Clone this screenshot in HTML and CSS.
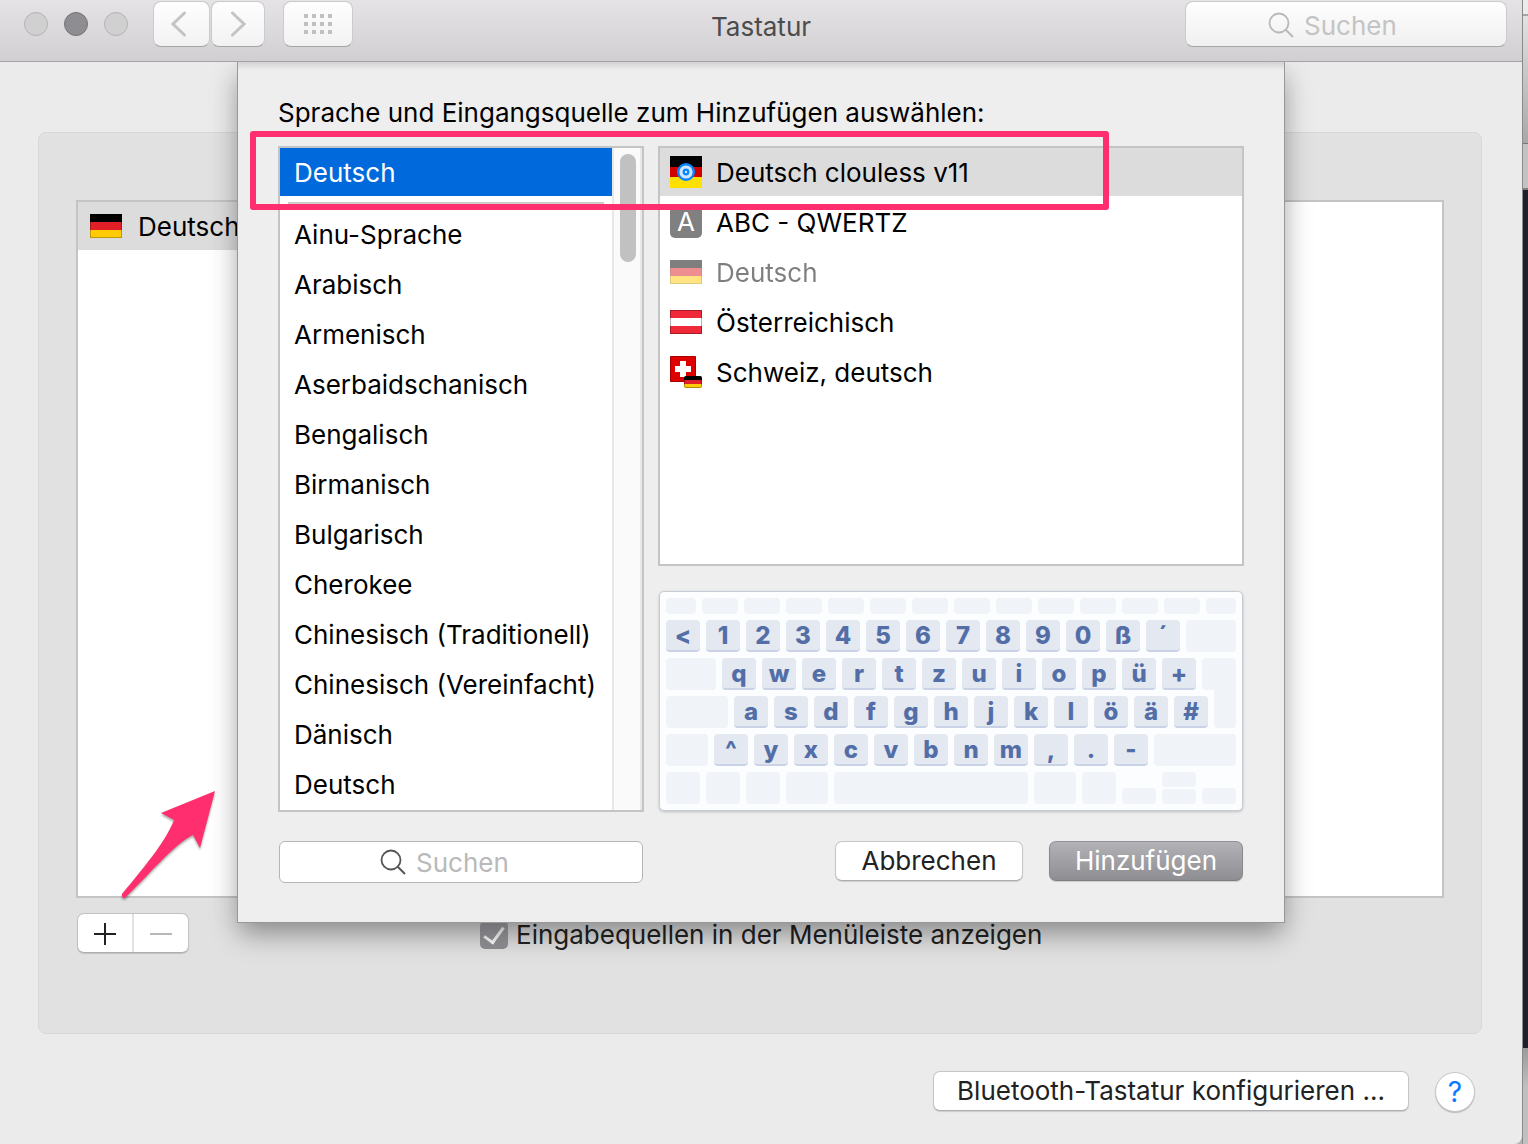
FILE: index.html
```html
<!DOCTYPE html>
<html lang="de">
<head>
<meta charset="utf-8">
<title>Tastatur</title>
<link rel="stylesheet" href="styles.css">
</head>
<body>
<svg class="defs" aria-hidden="true">
  <symbol id="flag-de" viewBox="0 0 32 24">
    <path fill="#000" d="M0 0h32v8H0z"/><path fill="#e01f26" d="M0 8h32v8H0z"/><path fill="#ffcb05" d="M0 16h32v8H0z"/>
    <path fill="none" stroke="#000" stroke-opacity=".25" d="M.5.5h31v23H.5z"/>
  </symbol>
  <symbol id="lens" viewBox="0 0 26 26">
    <circle cx="11" cy="11" r="9.500" fill="none" stroke="currentColor" stroke-width="1.800"/><path d="M17.500 17.500l7.500 7.500" stroke="currentColor" stroke-width="2"/>
  </symbol>
</svg>
<div class="desktop">
  <main class="window">
    <header class="titlebar">
      <div class="tools">
        <div class="lights"><span class="light"></span><span class="light dark"></span><span class="light"></span></div>
        <div class="nav">
          <button class="tool back" aria-label="Zurück"><svg width="16" height="26" viewBox="0 0 16 26"><path d="M13.500 2L2 13l11.500 11"/></svg></button>
          <button class="tool forward" aria-label="Vor"><svg width="16" height="26" viewBox="0 0 16 26"><path d="M2.500 2L14 13 2.500 24"/></svg></button>
        </div>
        <button class="tool all" aria-label="Alle einblenden"><svg width="28" height="20" viewBox="0 0 28 20"><path class="dots" d="M0 0h4v4H0zM8 0h4v4H8zM16 0h4v4h-4zM24 0h4v4h-4zM0 8h4v4H0zM8 8h4v4H8zM16 8h4v4h-4zM24 8h4v4h-4zM0 16h4v4H0zM8 16h4v4H8zM16 16h4v4h-4zM24 16h4v4h-4z"/></svg></button>
      </div>
      <h1 class="title">Tastatur</h1>
      <label class="search top-search"><svg width="26" height="26"><use href="#lens"/></svg><input type="text" placeholder="Suchen" aria-label="Suchen"></label>
    </header>

    <div class="content">
      <section class="panel">
        <div class="sources box">
          <ul class="source-list">
            <li class="row current"><svg class="flag" width="32" height="24"><use href="#flag-de"/></svg>Deutsch</li>
          </ul>
        </div>
        <div class="panel-foot">
          <div class="segment">
            <button aria-label="Hinzufügen"><svg width="24" height="24" viewBox="0 0 24 24"><path d="M1 13h22M12 2v22" stroke="#222" stroke-width="2"/></svg></button>
            <button aria-label="Entfernen"><svg width="24" height="24" viewBox="0 0 24 24"><path d="M1 13h22" stroke="#b8b8b8" stroke-width="2"/></svg></button>
          </div>
          <label class="check"><input type="checkbox" checked>Eingabequellen in der Menüleiste anzeigen</label>
        </div>
      </section>
      <footer class="footer">
        <button class="push bluetooth">Bluetooth-Tastatur konfigurieren ...</button>
        <button class="help" aria-label="Hilfe">?</button>
      </footer>
    </div>

    <div class="sheet" role="dialog" aria-labelledby="sheet-title">
      <h2 class="sheet-title" id="sheet-title">Sprache und Eingangsquelle zum Hinzufügen auswählen:</h2>
      <div class="columns">
        <div class="languages box">
          <ul class="list" role="listbox" aria-label="Sprache">
            <li class="row selected" role="option" aria-selected="true">Deutsch</li>
            <li class="divider" role="presentation"></li>
            <li class="row" role="option">Ainu-Sprache</li>
            <li class="row" role="option">Arabisch</li>
            <li class="row" role="option">Armenisch</li>
            <li class="row" role="option">Aserbaidschanisch</li>
            <li class="row" role="option">Bengalisch</li>
            <li class="row" role="option">Birmanisch</li>
            <li class="row" role="option">Bulgarisch</li>
            <li class="row" role="option">Cherokee</li>
            <li class="row" role="option">Chinesisch (Traditionell)</li>
            <li class="row" role="option">Chinesisch (Vereinfacht)</li>
            <li class="row" role="option">Dänisch</li>
            <li class="row" role="option">Deutsch</li>
          </ul>
          <div class="scroller"><div class="thumb"></div></div>
        </div>
        <div class="right">
          <ul class="list layouts box" role="listbox" aria-label="Eingangsquelle">
            <li class="row current" role="option" aria-selected="true"><svg width="32" height="32" viewBox="0 0 32 32"><path d="M0 0h32v11H0z"/><path fill="#d00000" d="M0 11h32v10H0z"/><path fill="#ffe000" d="M0 21h32v11H0z"/><circle cx="16" cy="16" r="7.800" fill="#cfe6ff" stroke="#0a84ff" stroke-width="2.400"/><circle cx="16" cy="16" r="2.300" fill="#cfe6ff" stroke="#0a84ff" stroke-width="2.200"/></svg>Deutsch clouless v11</li>
            <li class="row" role="option"><span class="letter">A</span>ABC - QWERTZ</li>
            <li class="row disabled" role="option" aria-disabled="true"><svg width="32" height="24"><use href="#flag-de"/></svg>Deutsch</li>
            <li class="row" role="option"><svg width="32" height="24" viewBox="0 0 32 24"><path fill="#fff" d="M0 0h32v24H0z"/><path fill="#ef2938" d="M0 0h32v8H0zM0 16h32v8H0z"/><path fill="none" stroke="#000" stroke-opacity=".3" d="M.5.5h31v23H.5z"/></svg>Österreichisch</li>
            <li class="row" role="option"><svg width="32" height="32" viewBox="0 0 32 32"><path fill="#de0000" stroke="#a80000" d="M.5.5h25v25H.5z"/><path fill="#fff" d="M10 5h6v5h5v6h-5v5h-6v-5H5v-6h5z"/><path fill="#000" d="M14 24v-2q0-2 2-2h14q2 0 2 2v2z"/><path fill="#e01f26" d="M14 24h18v4H14z"/><path fill="#ffcb05" d="M14 28h18v2q0 2-2 2H16q-2 0-2-2z"/><rect x="14.500" y="20.500" width="17" height="11" rx="1.500" fill="none" stroke="#000" stroke-opacity=".3"/></svg>Schweiz, deutsch</li>
          </ul>
          <div class="keyboard">
            <div class="keys fn"><i class="w30"></i><i></i><i></i><i></i><i></i><i></i><i></i><i></i><i></i><i></i><i></i><i></i><i></i><i class="w30"></i></div>
            <div class="keys"><b>&lt;</b><b>1</b><b>2</b><b>3</b><b>4</b><b>5</b><b>6</b><b>7</b><b>8</b><b>9</b><b>0</b><b>ß</b><b>´</b><i class="fill"></i></div>
            <div class="keys"><i class="w50"></i><b>q</b><b>w</b><b>e</b><b>r</b><b>t</b><b>z</b><b>u</b><b>i</b><b>o</b><b>p</b><b>ü</b><b>+</b><i class="fill enter-top"></i></div>
            <div class="keys"><i class="w62"></i><b>a</b><b>s</b><b>d</b><b>f</b><b>g</b><b>h</b><b>j</b><b>k</b><b>l</b><b>ö</b><b>ä</b><b>#</b><i class="fill enter"></i></div>
            <div class="keys"><i class="w42"></i><b>^</b><b>y</b><b>x</b><b>c</b><b>v</b><b>b</b><b>n</b><b>m</b><b>,</b><b>.</b><b>-</b><i class="fill"></i></div>
            <div class="keys"><i></i><i></i><i></i><i class="w42"></i><i class="fill"></i><i class="w42"></i><i></i><i class="half"></i><span class="updown"><i></i><i></i></span><i class="half"></i></div>
          </div>
        </div>
      </div>
      <div class="sheet-foot">
        <label class="search"><svg width="26" height="26"><use href="#lens"/></svg><input type="text" placeholder="Suchen" aria-label="Sprache suchen"></label>
        <div class="actions">
          <button class="push cancel">Abbrechen</button>
          <button class="push primary">Hinzufügen</button>
        </div>
      </div>
      <div class="mark"></div>
    </div>

    <svg class="arrow" width="100" height="114" viewBox="0 0 100 114"><path fill="#ff2e6e" d="M97 3L43 25l13 7C48 54 22 84 4 106q-1 4 3 4C28 90 58 54 75 47l7 13z"/></svg>
  </main>
  <aside class="behind"><div class="tab"></div><div class="bar"></div><div class="strip"></div><div class="dark-area"></div><div class="base"></div></aside>
</div>
</body>
</html>
```
FILE: styles.css
```css
* { box-sizing: border-box; }

body {
  margin: 0;
  font: 26px/32px Inter, "Liberation Sans", sans-serif;
  color: #000;
}

button, input { font: inherit; color: inherit; }
button { padding: 0; border: 0; }
ul { margin: 0; padding: 0; list-style: none; }
svg { flex: none; display: block; }
.defs { position: absolute; width: 0; height: 0; }

.desktop { display: flex; min-height: 100vh; background: #b4b4b4; }

.window {
  position: relative;
  flex: 1;
  display: flex;
  flex-direction: column;
  background: #ebebeb;
  border-radius: 0 0 8px 0;
}

/* Title bar */
.titlebar {
  position: relative;
  z-index: 2;
  display: grid;
  grid-template-columns: 1fr auto 1fr;
  height: 62px;
  padding: 1px 15px 0;
  background: linear-gradient(#e5e3e6, #d1cfd2);
  border-bottom: 1px solid #a3a3a3;
}
.tools { display: flex; align-items: flex-start; padding-left: 9px; }
.lights { display: flex; gap: 16px; width: 129px; padding-top: 11px; }
.light { width: 24px; height: 24px; border-radius: 50%; background: #d0d0d0; border: 1px solid #b3b3b3; }
.light.dark { background: #8e8d92; border-color: #737277; }
.nav { display: flex; gap: 1px; margin-right: 18px; }
.tool {
  display: flex;
  align-items: center;
  justify-content: center;
  height: 46px;
  border: 1px solid #cbcacc;
  border-bottom-color: #a5a4a6;
  border-radius: 8px;
  background: linear-gradient(#fefefe, #f2f2f2);
}
.tool path { fill: none; stroke: #c4c4c4; stroke-width: 3; stroke-linecap: round; }
.tool .dots { fill: #c0c0c0; stroke: none; }
.back { width: 57px; padding-right: 6px; }
.forward { width: 54px; }
.all { width: 70px; }
.title { margin: 0; padding-top: 10px; font-size: 26px; font-weight: 400; color: #4c4c4c; }

.search {
  display: flex;
  align-items: center;
  justify-content: center;
  gap: 10px;
  border: 1px solid #b5b5b5;
  border-radius: 6px;
  background: #fff;
  color: #555;
}
.search input { width: 126px; height: 36px; padding: 1px 0 0; border: 0; outline: 0; background: none; }
.search input::placeholder { color: #b9b9b9; opacity: 1; }
.top-search {
  justify-self: end;
  width: 322px;
  height: 46px;
  padding: 2px 0 0 6px;
  border-color: #cbcacc #cbcacc #a5a4a6;
  border-radius: 8px;
  background: linear-gradient(#fefefe, #f0f0f0);
  color: #b9b9b9;
}
.top-search input::placeholder { color: #c4c4c4; }

/* Keyboard pane */
.content { flex: 1; display: flex; flex-direction: column; padding: 70px 40px 32px 38px; }
.panel {
  flex: 1;
  display: flex;
  flex-direction: column;
  padding: 67px 37px 80px;
  background: #e1e1e1;
  border: 1px solid #d8d8d8;
  border-radius: 8px;
}
.box { border: 2px solid #c4c4c4; background: #fff; }
.sources { flex: 1; }
.source-list { width: 30%; }
.row { display: flex; align-items: center; gap: 14px; height: 48px; padding: 2px 14px 0; white-space: nowrap; }
.row svg { margin-top: -2px; }
.current { background: #dcdcdc; }
.sources .row { gap: 16px; padding-left: 12px; }
.panel-foot { display: flex; align-items: center; height: 40px; margin-top: 15px; }
.segment {
  display: flex;
  width: 112px;
  height: 40px;
  margin-left: 1px;
  border: 1px solid #c2c2c2;
  border-bottom-color: #adadad;
  border-radius: 7px;
  background: #fff;
  box-shadow: 0 1px 1px #0002;
}
.segment button { flex: 1; display: flex; align-items: center; justify-content: center; background: none; }
.segment button + button { border-left: 2px solid #e2e2e2; }
.check { display: flex; align-items: center; gap: 8px; margin-left: 291px; padding-top: 4px; color: #222; }
.check input {
  appearance: none;
  display: grid;
  place-items: center;
  width: 28px;
  height: 28px;
  margin: 0;
  padding-bottom: 5px;
  border-radius: 5px;
  background: linear-gradient(#a9a8ad, #8e8d92);
}
.check input::after {
  content: "";
  width: 9px;
  height: 17px;
  border: solid #fff;
  border-width: 0 3px 3px 0;
  transform: rotate(36deg);
}

.footer { display: flex; justify-content: flex-end; gap: 26px; padding: 37px 7px 0 0; }
.push {
  height: 40px;
  border: 1px solid #c6c6c6;
  border-bottom-color: #adadad;
  border-radius: 7px;
  background: #fff;
  color: #222;
  white-space: nowrap;
  box-shadow: 0 1px 1px #0002;
}
.bluetooth { width: 476px; }
.help {
  width: 40px;
  height: 40px;
  margin-top: 1px;
  border: 1px solid #c6c6c6;
  border-radius: 50%;
  background: #fff;
  color: #0a7aff;
  font-size: 28px;
  box-shadow: 0 1px 1px #0003;
}

/* Sheet that slides out of the title bar */
.sheet {
  position: absolute;
  z-index: 1;
  top: 62px;
  left: 0;
  right: 0;
  width: 1048px;
  margin: 0 auto;
  padding: 35px 40px 39px;
  border: 1px solid #989898;
  border-top: 0;
  background: linear-gradient(#d2d2d2, #eee 8px);
  box-shadow: 0 12px 26px -2px #0006;
}
.sheet-title { margin: 0 0 17px; font-size: 26px; line-height: 32px; font-weight: 400; white-space: nowrap; }
.columns { display: flex; gap: 14px; }
.languages { display: flex; width: 366px; height: 666px; }
.list { flex: 1; display: flex; flex-direction: column; gap: 2px; }
.selected { background: #0069dc; color: #fff; }
.divider { height: 10px; padding: 4px 8px; }
.divider::before { content: ""; display: block; height: 2px; background: #ccc; }
.scroller { width: 30px; padding: 6px; background: #fafafa; border: solid #e8e8e8; border-width: 0 2px; }
.thumb { width: 16px; height: 108px; border-radius: 8px; background: #c1c1c1; }
.right { flex: 1; display: flex; flex-direction: column; gap: 25px; }
.layouts { flex: none; height: 420px; }
.layouts .row { padding-left: 10px; }
.disabled { opacity: .5; }
.letter { width: 32px; height: 32px; margin-top: -2px; border-radius: 5px; background: #808080; color: #fff; text-align: center; }

.keyboard {
  display: flex;
  flex-direction: column;
  gap: 6px;
  width: 584px;
  margin-left: 1px;
  padding: 6px;
  border: 1px solid #c5ccd3;
  border-radius: 5px;
  background: #fcfdff;
  box-shadow: 0 1px 3px #0003;
}
.keys { display: flex; gap: 6px; height: 32px; }
.keys i, .keys b { flex: none; width: 34px; border-radius: 4px; background: #f0f3f8; }
.keys b { background: #e3e8f1; border-bottom: 2px solid #c9d3e5; color: #536ea7; font-size: 24px; font-weight: 800; line-height: 31px; text-align: center; }
.keys.fn { height: 16px; }
.fn i { width: 36px; }
.keys .w30 { width: 30px; }
.keys .w42 { width: 42px; }
.keys .w50 { width: 50px; }
.keys .w62 { width: 62px; }
.keys .fill { flex: 1; }
.keys .enter-top { border-bottom-right-radius: 0; }
.keys .enter { height: 42px; margin-top: -10px; }
.keys .half { height: 16px; align-self: flex-end; }
.updown { display: flex; flex-direction: column; gap: 2px; }
.updown i { height: 15px; flex: none; }

.sheet-foot { display: flex; align-items: flex-start; justify-content: space-between; margin: 29px 1px 0; }
.sheet-foot .search { width: 364px; height: 42px; }
.actions { display: flex; gap: 26px; }
.cancel { width: 188px; }
.primary { width: 194px; border-color: #929196 #88878c #7d7c81; background: linear-gradient(#b3b2b7, #8e8d92); color: #fff; }

/* Annotations */
.mark {
  position: absolute;
  left: 12px;
  top: 69px;
  width: 859px;
  height: 79px;
  border: 6px solid #ff2e6e;
  border-radius: 3px;
}
.arrow { position: absolute; z-index: 2; left: 118px; top: 788px; filter: drop-shadow(0 2px 1px #0005); }

/* Windows behind */
.behind { display: flex; flex-direction: column; width: 6px; border-left: 1px solid #8a8a8a; }
.tab { height: 16px; background: #ebebeb; border-bottom: 2px solid #a5a5a5; }
.bar { height: 128px; background: linear-gradient(#e2e2e2, #a8a8a8); border-bottom: 1px solid #777; }
.strip { height: 46px; background: #c3c3c3; border-bottom: 2px solid #808080; }
.dark-area { flex: 1; background: #1f1f29; }
.base { height: 96px; background: linear-gradient(#9a9a9a, #c0c0c0 40px); }
```
